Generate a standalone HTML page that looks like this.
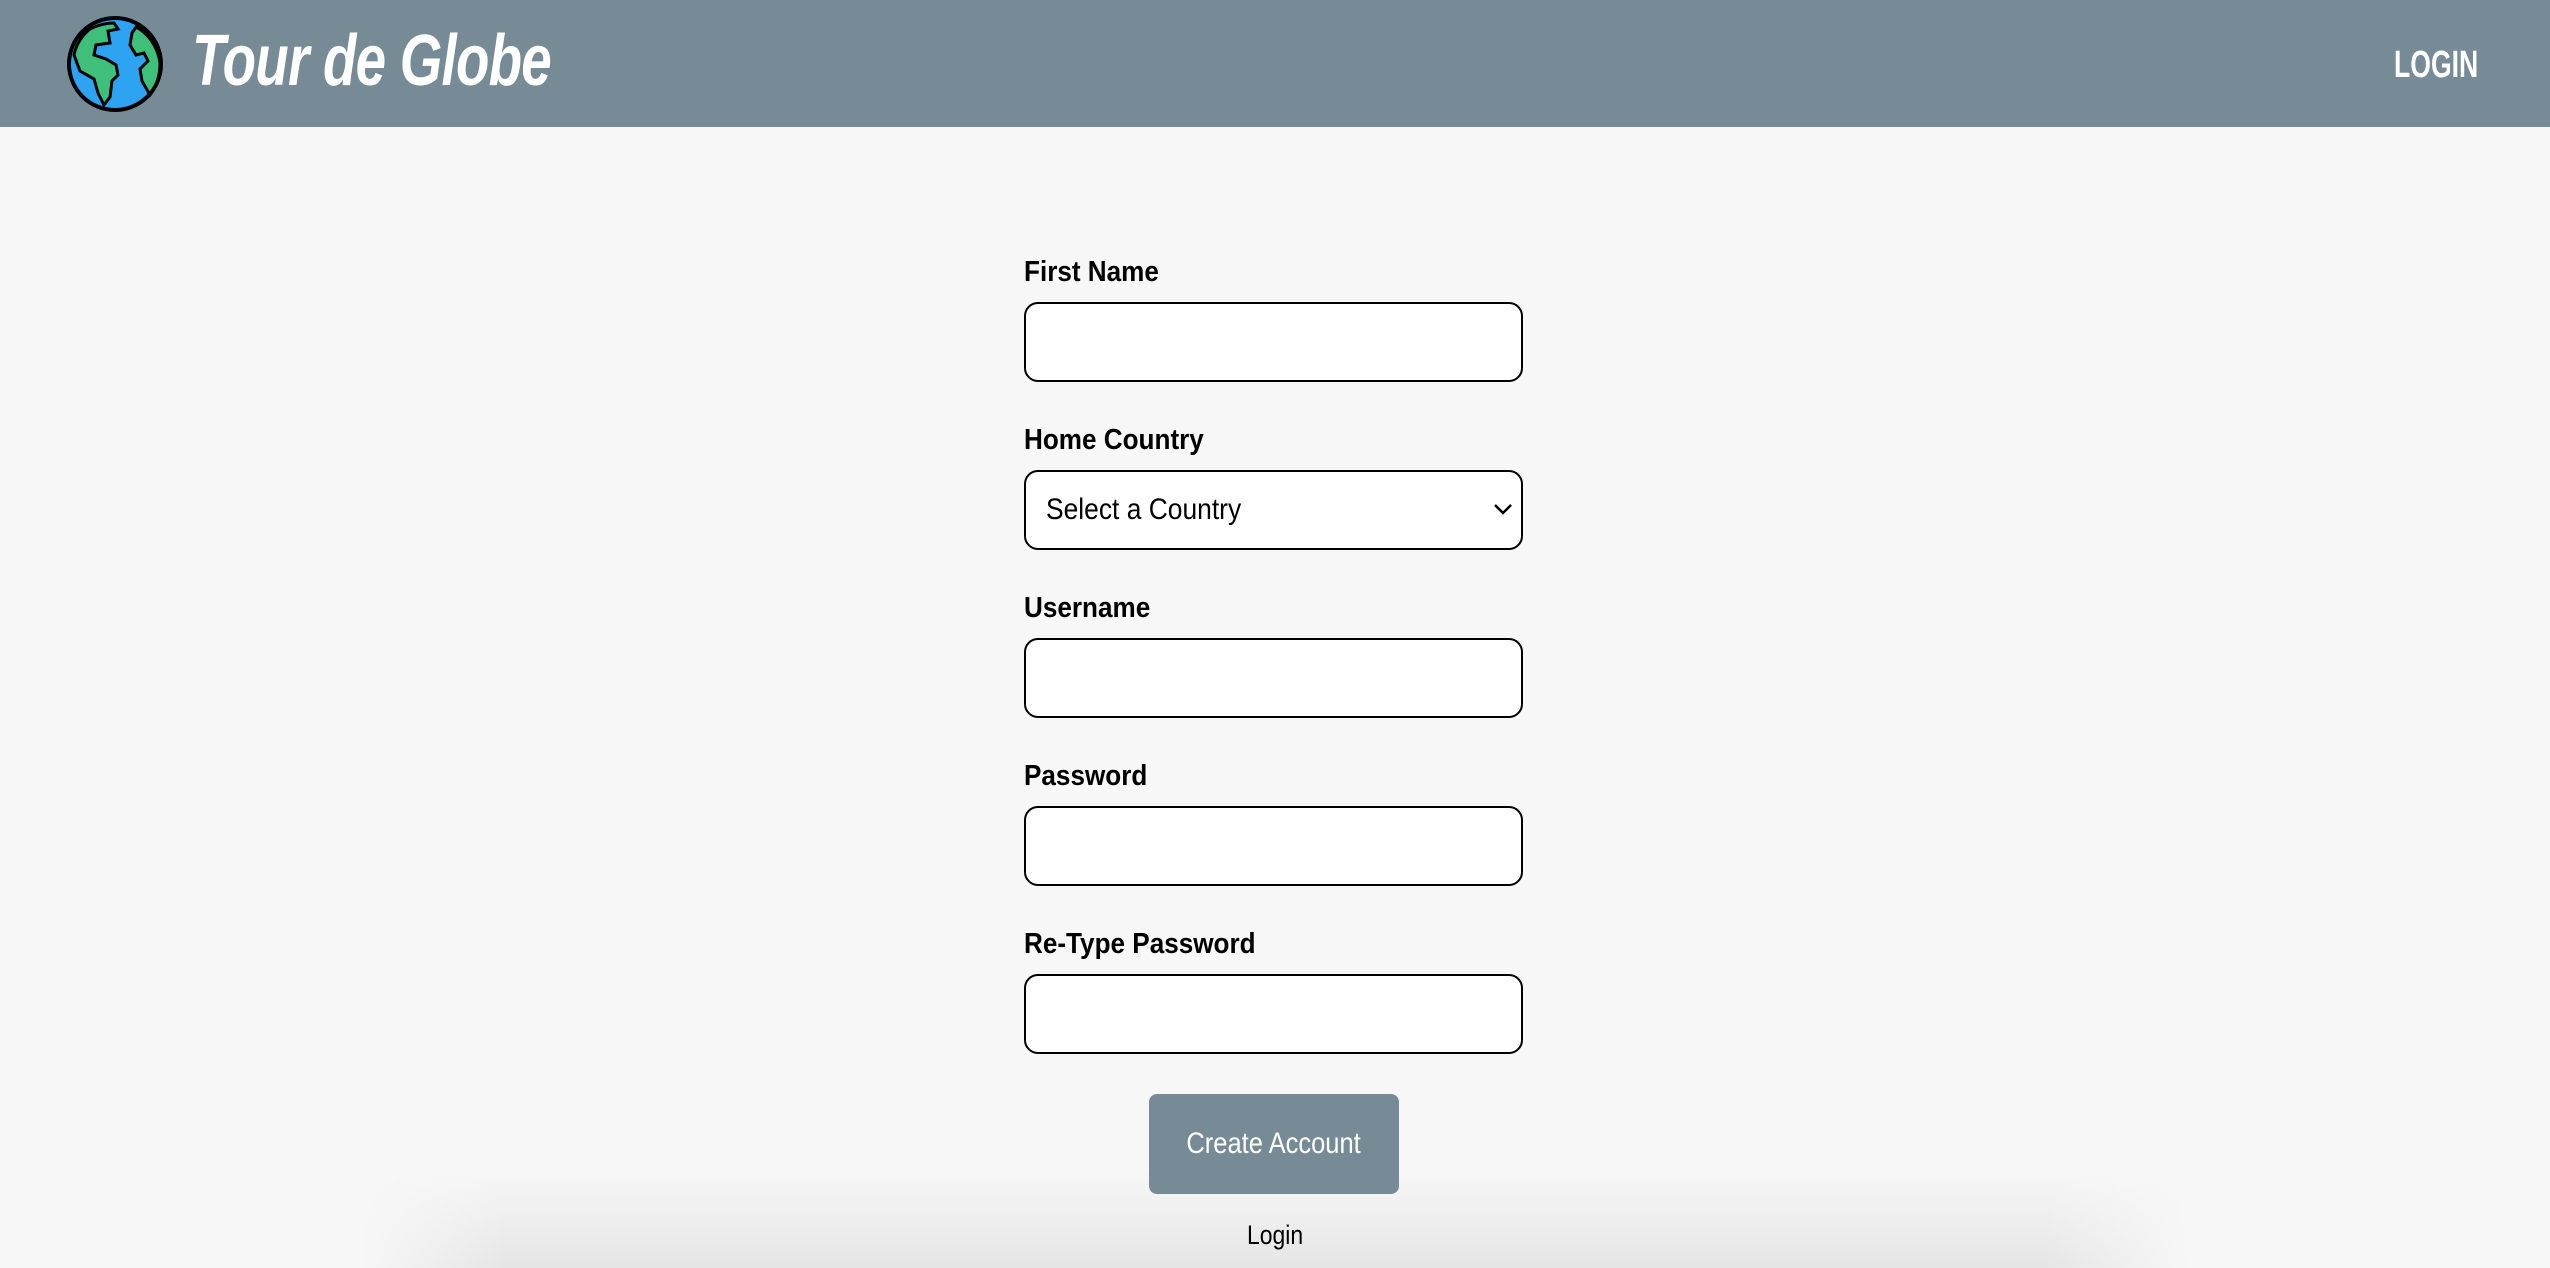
<!DOCTYPE html>
<html><head><meta charset="utf-8"><style>
html,body{margin:0;padding:0;overflow:hidden;width:2550px;height:1268px;}
body{background:#f7f7f7;font-family:"Liberation Sans",sans-serif;position:relative;}
.hdr{position:absolute;left:0;top:0;width:2550px;height:127px;background:#778b97;}
.title{position:absolute;left:192px;top:20px;font-size:72px;color:#fff;font-style:italic;font-weight:bold;letter-spacing:-1px;transform:scaleX(0.76);transform-origin:left;}
.login{position:absolute;left:2394px;top:44px;font-size:38px;font-weight:bold;color:#fff;transform:scaleX(0.7);transform-origin:left;}
.lbl{position:absolute;left:1024px;font-size:29px;font-weight:bold;color:#000;transform:scaleX(0.9);transform-origin:left;}
.in{position:absolute;left:1024px;width:495px;height:76px;border:2.5px solid #000;border-radius:14px;background:#fff;}
.sel{font-size:30px;line-height:76px;padding-left:20px;box-sizing:content-box;}
.btn{position:absolute;left:1149px;top:1094px;width:250px;height:100px;background:#778b97;border-radius:8px;color:#fff;font-size:30px;text-align:center;line-height:100px;}
.lg{position:absolute;left:0;width:2550px;top:1220px;text-align:center;font-size:27px;color:#000;}
.shadow{position:absolute;left:360px;top:1170px;width:1830px;height:98px;background:linear-gradient(to bottom,rgba(0,0,0,0),rgba(0,0,0,0.07));-webkit-mask-image:linear-gradient(to right,transparent,#000 8%,#000 92%,transparent);mask-image:linear-gradient(to right,transparent,#000 8%,#000 92%,transparent);}
</style></head><body>
<div class="shadow"></div>
<div class="hdr">
<svg style="position:absolute;left:66px;top:15px" width="98" height="98" viewBox="0 0 98 98">
<circle cx="49" cy="49" r="46" fill="#2ea3f2"/>
<path d="M24 14 C32 10 40 8 48 8 L52 14 L42 16 L44 28 L30 30 L28 40 L40 44 L50 50 L52 60 L46 66 L44 82 L38 90 L32 78 L28 64 L14 56 L8 40 C10 30 16 20 24 14Z" fill="#3fc07a" stroke="#000" stroke-width="3"/>
<path d="M70 12 C82 18 92 32 94 48 C94 62 90 72 84 80 L76 66 L74 54 L82 46 L78 38 L70 40 L64 30 L66 18Z" fill="#3fc07a" stroke="#000" stroke-width="3"/>
<circle cx="49" cy="49" r="46" fill="none" stroke="#000" stroke-width="4"/>
</svg>
<div class="title">Tour de Globe</div>
<div class="login">LOGIN</div>
</div>
<div class="lbl" style="top:256px">First Name</div>
<div class="in" style="top:302px"></div>
<div class="lbl" style="top:424px">Home Country</div>
<div class="in sel" style="top:470px;width:475px"><span style="display:inline-block;transform:scaleX(0.88);transform-origin:left">Select a Country</span><svg style="position:absolute;right:8px;top:30px" width="20" height="14" viewBox="0 0 20 14"><path d="M2 3 L10 11 L18 3" fill="none" stroke="#000" stroke-width="2.5"/></svg></div>
<div class="lbl" style="top:592px">Username</div>
<div class="in" style="top:638px"></div>
<div class="lbl" style="top:760px">Password</div>
<div class="in" style="top:806px"></div>
<div class="lbl" style="top:928px">Re-Type Password</div>
<div class="in" style="top:974px"></div>
<div class="btn"><span style="display:inline-block;transform:scaleX(0.85)">Create Account</span></div>
<div class="lg"><span style="display:inline-block;transform:scaleX(0.85)">Login</span></div>
</body></html>
